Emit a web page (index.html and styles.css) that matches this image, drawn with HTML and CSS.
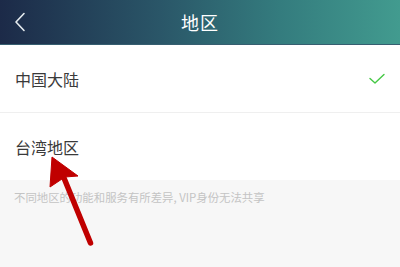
FILE: index.html
```html
<!DOCTYPE html>
<html lang="zh">
<head>
<meta charset="utf-8">
<link rel="stylesheet" href="styles.css">
</head>
<body>
<div class="page">
  <header class="topbar">
    <svg class="back" width="12" height="20" viewBox="0 0 12 20"><path d="M10 1.5 L2 10 L10 18.5" fill="none" stroke="#e6ecef" stroke-width="1.6" stroke-linecap="round" stroke-linejoin="round"/></svg>
    <h1 class="title">地区</h1>
  </header>
  <ul class="list">
    <li class="row"><span class="label">中国大陆</span>
      <svg class="check" width="18" height="14" viewBox="0 0 18 14"><path d="M2 6.5 L7 11 L16 2.5" fill="none" stroke="#45c845" stroke-width="1.4" stroke-linecap="round" stroke-linejoin="round"/></svg>
    </li>
    <li class="row"><span class="label">台湾地区</span></li>
  </ul>
  <div class="note">不同地区的功能和服务有所差异, VIP身份无法共享</div>
  <svg class="arrow" width="400" height="267" viewBox="0 0 400 267">
    <line x1="90.5" y1="243" x2="64" y2="178" stroke="#c00000" stroke-width="5.5" stroke-linecap="round"/>
    <polygon points="52,157 78,176 65,177 50,187" fill="#c00000" stroke="#c00000" stroke-width="1" stroke-linejoin="round"/>
  </svg>
</div>
</body>
</html>
```
FILE: styles.css
```css
html, body { margin: 0; padding: 0; }
body {
  font-family: "Noto Sans CJK SC", "Noto Sans", sans-serif;
  background: #f7f7f7;
  width: 400px;
  height: 267px;
  overflow: hidden;
}
.page { position: relative; width: 400px; height: 267px; }
.topbar {
  height: 45px;
  box-sizing: border-box;
  display: flex;
  align-items: center;
  justify-content: center;
  position: relative;
  background: linear-gradient(to right, #1c2a48 0%, #2a5668 40%, #347c7e 70%, #429b8f 100%);
  border-bottom: 1px solid #365e70;
}
.back { position: absolute; left: 14px; top: 12px; }
.title {
  margin: 0;
  font-size: 18px;
  font-weight: 400;
  color: #ffffff;
  letter-spacing: 1px;
}
.list { margin: 0; padding: 0; list-style: none; background: #fff; }
.row {
  height: 67px;
  display: flex;
  align-items: center;
  justify-content: space-between;
  padding: 0 14px 0 15px;
  border-bottom: 1px solid #efefef;
}
.row:last-child { border-bottom: none; }
.label { font-size: 16px; color: #3a3a3a; }
.note {
  padding: 9px 14px 0;
  font-size: 11.4px;
  line-height: 16px;
  color: #c4c4c4;
}
.arrow { position: absolute; left: 0; top: 0; pointer-events: none; }
```
